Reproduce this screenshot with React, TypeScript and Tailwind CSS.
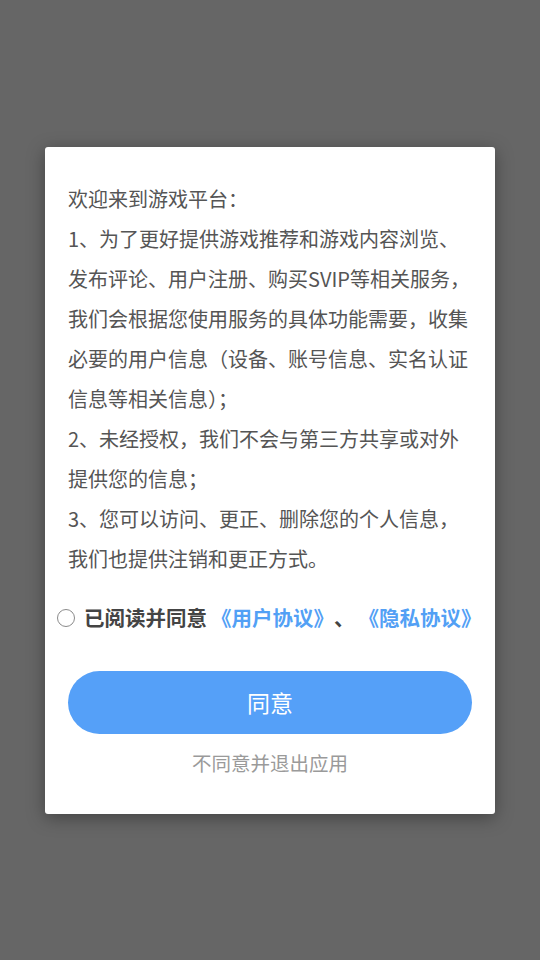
import React from "react";

const lines = [
  "欢迎来到游戏平台：",
  "1、为了更好提供游戏推荐和游戏内容浏览、",
  "发布评论、用户注册、购买SVIP等相关服务，",
  "我们会根据您使用服务的具体功能需要，收集",
  "必要的用户信息（设备、账号信息、实名认证",
  "信息等相关信息）；",
  "2、未经授权，我们不会与第三方共享或对外",
  "提供您的信息；",
  "3、您可以访问、更正、删除您的个人信息，",
  "我们也提供注销和更正方式。",
];

export default function App() {
  return (
    <div
      className="w-[540px] h-[960px] bg-[#666666] flex items-center justify-center"
      style={{ fontFamily: '"Noto Sans CJK SC", "Noto Sans", sans-serif' }}
    >
      <div className="w-[450px] bg-white rounded-[3px] shadow-[0_4px_18px_rgba(0,0,0,0.35)] pt-[32px] pb-[36px]">
        <div className="px-[23px] text-[20px] leading-[40px] text-[#555555]">
          {lines.map((l) => (
            <div key={l} className="whitespace-nowrap">
              {l}
            </div>
          ))}
        </div>

        <div className="mt-[19px] pl-[12px] flex items-center h-[40px] whitespace-nowrap text-[20.5px] font-bold">
          <span className="w-[18px] h-[18px] rounded-full border-[1.5px] border-[#8a8a8a] shrink-0" />
          <span className="ml-[9px] text-[#444444]">已阅读并同意</span>
          <span className="ml-[4px] text-[#52a0f5]">《用户协议》</span>
          <span className="text-[#444444]">、</span>
          <span className="ml-[4px] text-[#52a0f5]">《隐私协议》</span>
        </div>

        <button className="mt-[33px] mx-[23px] w-[404px] h-[63px] rounded-full bg-[#55a0f8] text-white text-[23px] flex items-center justify-center">
          同意
        </button>

        <div className="mt-[14px] h-[30px] leading-[30px] text-center text-[19.5px] text-[#9a9a9a]">
          不同意并退出应用
        </div>
      </div>
    </div>
  );
}
